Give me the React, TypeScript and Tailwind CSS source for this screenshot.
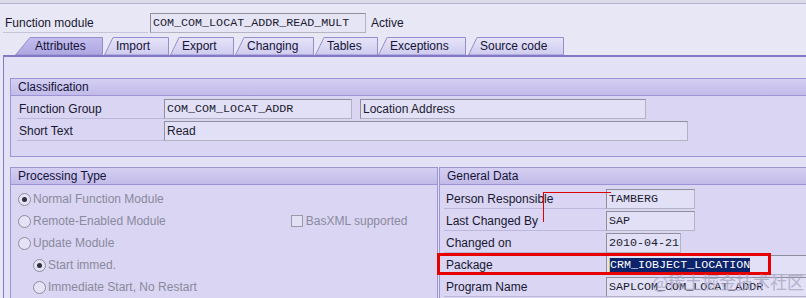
import React from 'react'

// ─── Datos ────────────────────────────────────────────────────────────────────

const tabs = [
  { label: 'Attributes', width: 88, ml: 15, slant: 15, active: true },
  { label: 'Import', width: 65, ml: 1, slant: 9 },
  { label: 'Export', width: 64, ml: 1, slant: 9 },
  { label: 'Changing', width: 79, ml: 1, slant: 9 },
  { label: 'Tables', width: 63, ml: 1, slant: 9 },
  { label: 'Exceptions', width: 88, ml: 0, slant: 9 },
  { label: 'Source code', width: 96, ml: 2, slant: 9 },
]

const mono = "font-['Liberation_Mono','Courier_New',monospace] text-[11.7px]"

// ─── Piezas ───────────────────────────────────────────────────────────────────

function Tab({ idx, label, width, ml, slant, active }: { idx: number; label: string; width: number; ml: number; slant: number; active?: boolean }) {
  const h = 18
  const pts = `0.5,${h} ${slant},0.5 ${width - 0.5},0.5 ${width - 0.5},${h}`
  const gid = `tabgrad${idx}`
  return (
    <div className="relative h-[18px] shrink-0" style={{ width, marginLeft: ml }}>
      <svg className="absolute inset-0" width={width} height={h}>
        <defs>
          <linearGradient id={gid} x1="0" y1="0" x2="0" y2="1">
            <stop offset="0" stopColor={active ? '#c4bdee' : '#e6e4f8'} />
            <stop offset="1" stopColor={active ? '#aea6e0' : '#cfcbef'} />
          </linearGradient>
        </defs>
        <polygon points={pts} fill={`url(#${gid})`} stroke="#958dcf" strokeWidth="1" />
      </svg>
      <span
        className={`relative block leading-[18px] text-[12px] text-[#141438] ${active ? 'pl-[20px]' : 'pl-[12px]'}`}
      >
        {label}
      </span>
    </div>
  )
}

function Field({ children, className = '' }: { children: React.ReactNode; className?: string }) {
  return (
    <div
      className={`h-[20px] shrink-0 border border-t-[#8f8f9c] border-l-[#8f8f9c] border-r-[#b4b4c0] border-b-[#b4b4c0] bg-[#e2e0f6] pl-[2px] leading-[18px] text-[#1c1c30] whitespace-nowrap overflow-hidden ${className}`}
    >
      {children}
    </div>
  )
}

function Label({ text, className = '' }: { text: string; className?: string }) {
  return (
    <div className={`h-[20px] shrink-0 border-b border-[#bcb8dc] pl-[2px] leading-[20px] text-[#181830] ${className}`}>
      {text}
    </div>
  )
}

function GroupHeader({ text }: { text: string }) {
  return (
    <div className="h-[17px] border-b border-[#9c94d4] bg-gradient-to-b from-[#d4cff2] to-[#c2bbe9] pl-[7px] leading-[16px] text-[#141438]">
      {text}
    </div>
  )
}

function Radio({ checked, label, indent }: { checked?: boolean; label: string; indent?: boolean }) {
  return (
    <div className={`flex h-[22px] items-center ${indent ? 'pl-[22px]' : 'pl-[7px]'}`}>
      <span className="flex h-[13px] w-[13px] items-center justify-center rounded-full border border-[#8e8e9e] bg-[#e4e2f4]">
        {checked && <span className="h-[5px] w-[5px] rounded-full bg-[#303044]" />}
      </span>
      <span className="ml-[2px] text-[#8a8a9c]">{label}</span>
    </div>
  )
}

// ─── Componente ───────────────────────────────────────────────────────────────

export default function App() {
  return (
    <div className="relative h-[298px] w-[806px] overflow-hidden bg-[#e8e7f5] font-['Liberation_Sans',Arial,sans-serif] text-[12px]">
      {/* Barra superior */}
      <div className="h-[4px] border-b border-[#b6b3cf] bg-[#dcdbea]" />

      {/* Function module */}
      <div className="flex items-end pt-[9px]">
        <Label text="Function module" className="ml-[3px] w-[145px] border-[#c6c4d8]" />
        <Field className={`ml-[2px] w-[216px] bg-[#e6e5f6] ${mono}`}>COM_COM_LOCAT_ADDR_READ_MULT</Field>
        <span className="ml-[5px] leading-[20px] text-[#181830]">Active</span>
      </div>

      {/* Pestañas */}
      <div className="mt-[4px] flex">
        {tabs.map((t, i) => (
          <Tab key={t.label} idx={i} {...t} />
        ))}
      </div>

      {/* Panel */}
      <div className="ml-[3px] h-[300px] border-l border-t-2 border-[#8179c6] bg-[#e3e1f6] pl-[6px] pt-[21px]">
        {/* Classification */}
        <div className="w-[820px] border border-[#9c94d4] bg-[#d9d5f3]">
          <GroupHeader text="Classification" />
          <div className="space-y-[2px] pl-[6px] pt-[3px] pb-[15px]">
            <div className="flex">
              <Label text="Function Group" className="w-[147px]" />
              <Field className={`w-[188px] ${mono}`}>COM_COM_LOCAT_ADDR</Field>
              <Field className="ml-[8px] w-[286px]">Location Address</Field>
            </div>
            <div className="flex">
              <Label text="Short Text" className="w-[147px]" />
              <Field className="w-[524px]">Read</Field>
            </div>
          </div>
        </div>

        {/* Processing Type + General Data */}
        <div className="mt-[10px] flex">
          <div className="h-[160px] w-[428px] shrink-0 border border-[#9c94d4] bg-[#d9d5f3]">
            <GroupHeader text="Processing Type" />
            <div className="pt-[3px]">
              <Radio checked label="Normal Function Module" />
              <div className="flex items-center">
                <Radio label="Remote-Enabled Module" />
                <div className="ml-[125px] flex items-center">
                  <span className="h-[12px] w-[12px] border border-[#9a9aa8] bg-[#e2e0f4]" />
                  <span className="ml-[3px] text-[#8a8a9c]">BasXML supported</span>
                </div>
              </div>
              <Radio label="Update Module" />
              <Radio checked indent label="Start immed." />
              <Radio indent label="Immediate Start, No Restart" />
            </div>
          </div>

          <div className="ml-[1px] h-[160px] w-[400px] shrink-0 border border-[#9c94d4] bg-[#d9d5f3]">
            <GroupHeader text="General Data" />
            <div className="space-y-[2px] pl-[4px] pt-[4px]">
              <div className="flex">
                <Label text="Person Responsible" className="w-[162px]" />
                <Field className={`w-[89px] ${mono}`}>TAMBERG</Field>
              </div>
              <div className="flex">
                <Label text="Last Changed By" className="w-[162px]" />
                <Field className={`w-[89px] ${mono}`}>SAP</Field>
              </div>
              <div className="flex">
                <Label text="Changed on" className="w-[162px]" />
                <Field className={`w-[75px] ${mono}`}>2010-04-21</Field>
              </div>
              <div className="flex">
                <Label text="Package" className="w-[162px]" />
                <Field className={`w-[230px] ${mono}`}>
                  <span className="border-l border-[#d8c060] bg-[#0c246c] text-white">CRM_IOBJECT_LOCATION</span>
                </Field>
              </div>
              <div className="flex">
                <Label text="Program Name" className="w-[162px]" />
                <Field className={`w-[230px] ${mono}`}>SAPLCOM_COM_LOCAT_ADDR</Field>
              </div>
            </div>
          </div>
        </div>
      </div>

      {/* Anotaciones */}
      <div className="absolute left-[437px] top-[253px] h-[22px] w-[334px] border-[3px] border-[#e60000]" />
      <div className="absolute left-[543px] top-[192px] h-px w-[68px] bg-[#e00000]" />
      <div className="absolute left-[543px] top-[192px] h-[30px] w-px bg-[#e00000]" />
      <div className="absolute left-[652px] top-[272px] font-['Noto_Sans_CJK_SC',sans-serif] text-[17px] leading-[20px] text-[#a9a6c4] opacity-80">
        @稀土掘金技术社区
      </div>
    </div>
  )
}
